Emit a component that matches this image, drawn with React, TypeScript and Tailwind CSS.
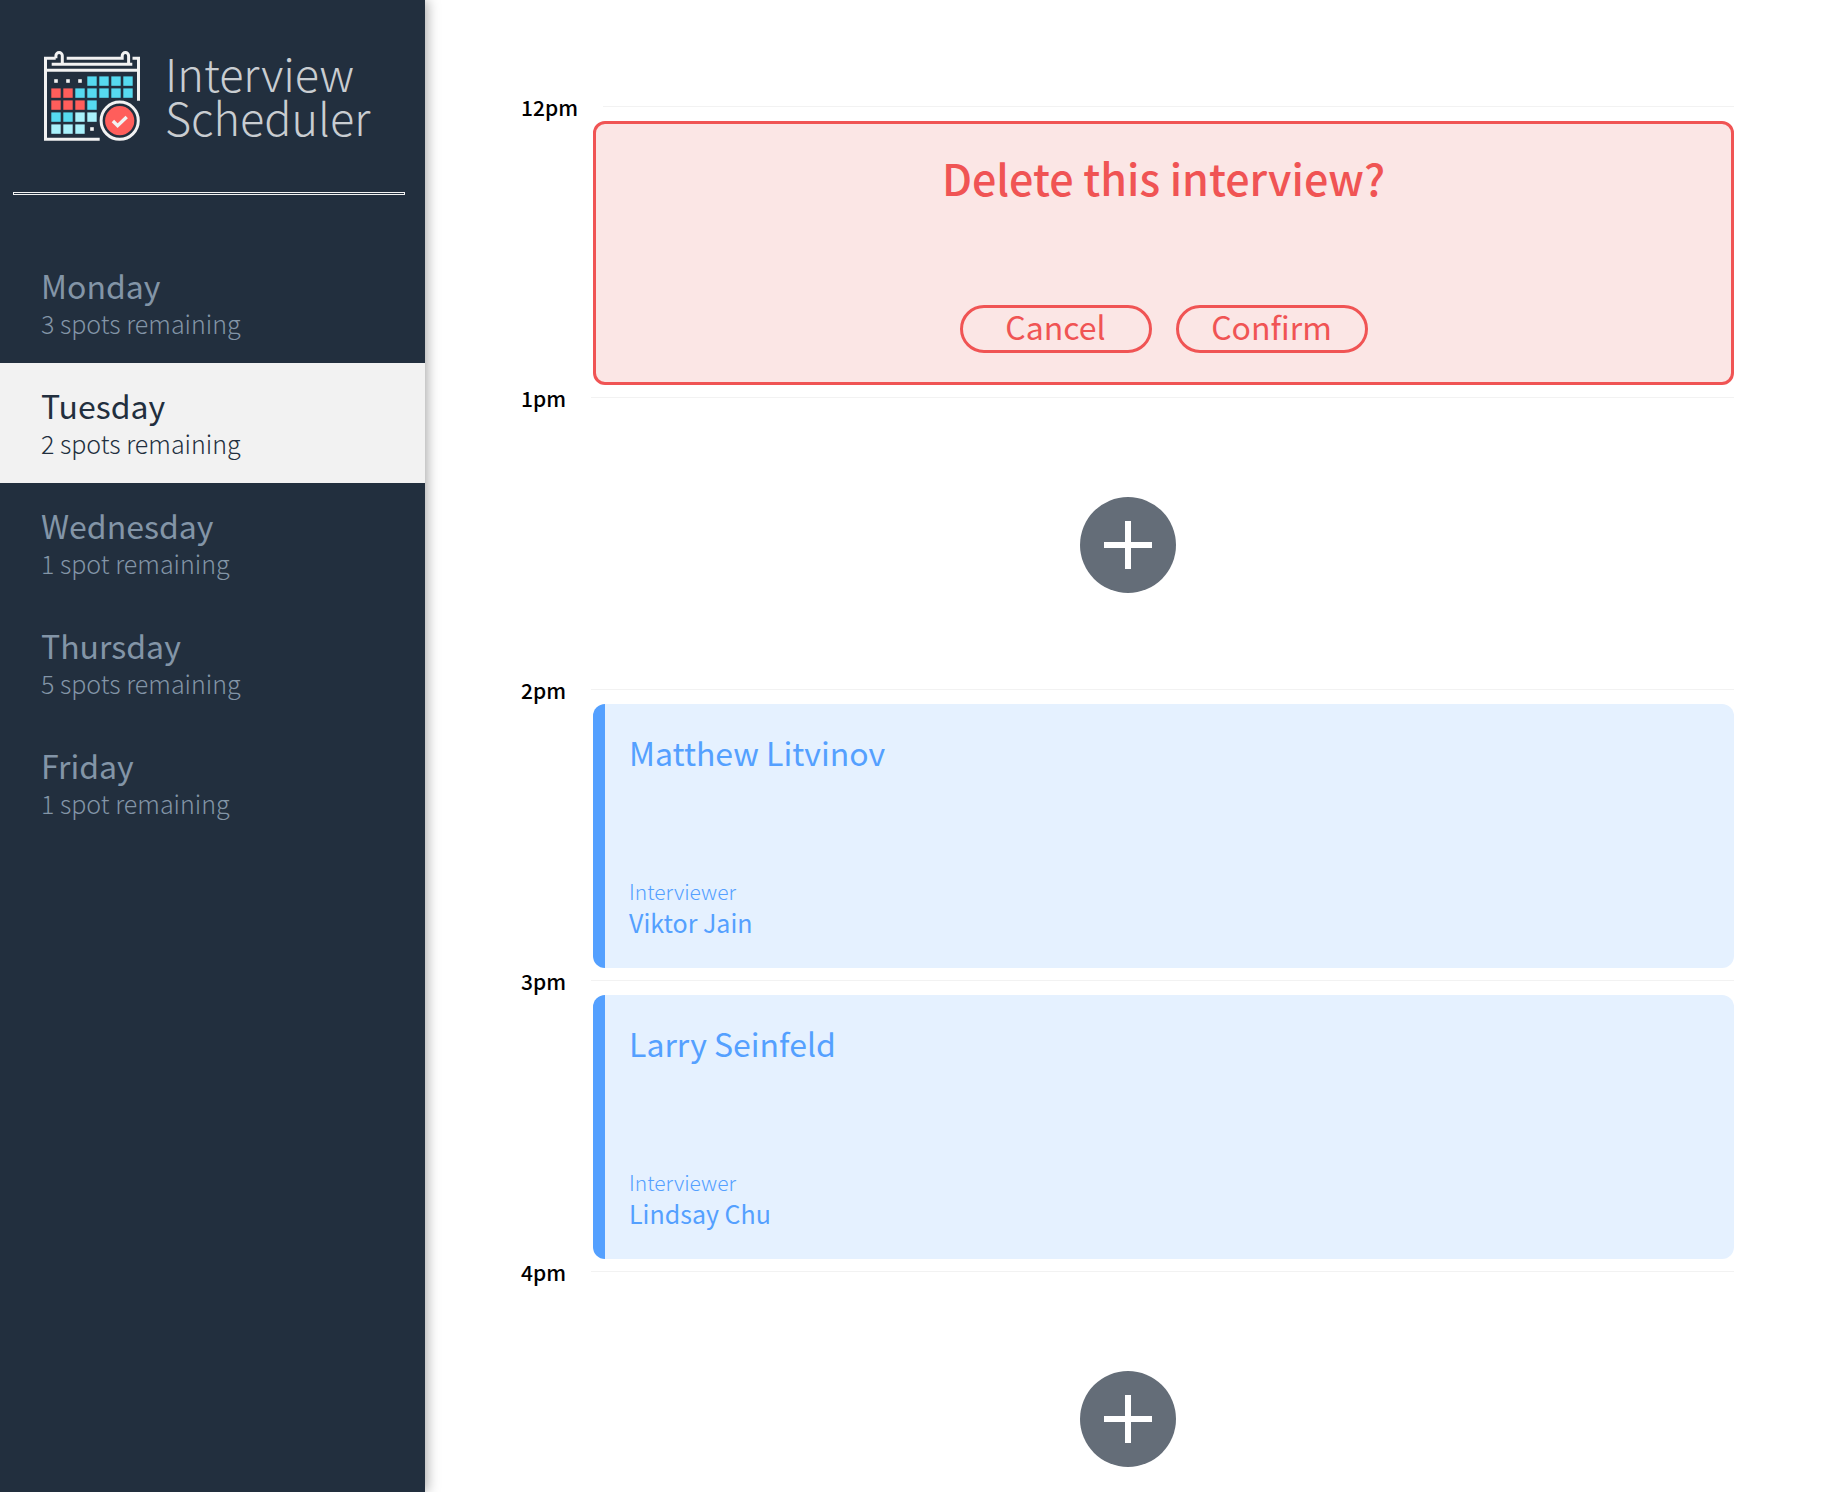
import React from "react";

type Day = { name: string; spots: string };

const days: Day[] = [
  { name: "Monday", spots: "3 spots remaining" },
  { name: "Tuesday", spots: "2 spots remaining" },
  { name: "Wednesday", spots: "1 spot remaining" },
  { name: "Thursday", spots: "5 spots remaining" },
  { name: "Friday", spots: "1 spot remaining" },
];

const CYAN = "#56daf0";
const PALE = "#a9f1fb";
const RED = "#ff5e5b";

// One entry per calendar cell; "." draws a small dot.
const cells = ["...cccc", "rrccccc", "rrrc", "ccpp", "ppp."];

function CalendarLogo() {
  return (
    <svg width="96" height="90" viewBox="0 0 96 90" fill="none" aria-hidden="true" className="shrink-0">
      <g stroke="#f2f2f2" strokeWidth="3">
        <path d="M11.7 7.2H1.5V88.3H55.7" />
        <path d="M11.9 7.2V4.8A3.2 3.2 0 0 1 18.3 4.8V13.3" />
        <path d="M22.7 7.2H78.2V4.8A3.2 3.2 0 0 1 84.6 4.8V13.3" />
        <path d="M88.5 7.2H94.5V49.7" />
        <path d="M7.7 13.3H88.3" />
        <path d="M1.5 19.3H94.5" />
        <circle cx="75.7" cy="69.7" r="18.6" />
      </g>
      {cells.map((row, y) =>
        row.split("").map((c, x) =>
          c === "." ? (
            <rect key={`${x}-${y}`} x={10.2 + x * 12} y={28.2 + y * 12} width="3.6" height="3.6" fill="#f2f2f2" />
          ) : (
            <rect
              key={`${x}-${y}`}
              x={7.3 + x * 12}
              y={25.4 + y * 12}
              width="9.4"
              height="9.4"
              fill={c === "c" ? CYAN : c === "r" ? RED : PALE}
            />
          )
        )
      )}
      <circle cx="75.7" cy="69.7" r="14.6" fill={RED} />
      <path d="M68.9 70L73.6 74.7L82.7 66" stroke="#f2f2f2" strokeWidth="3.4" />
    </svg>
  );
}

function Slot({ time, children }: { time: string; children: React.ReactNode }) {
  return (
    <section>
      <header className="flex h-[27px] items-start gap-[25px]">
        <h2 className="text-[21px] leading-[26px] font-medium text-black">{time}</h2>
        <div className="mt-3 h-px flex-1 bg-[#f2f2f2]" />
      </header>
      {children}
    </section>
  );
}

function AddButton() {
  return (
    <div className="flex h-[265px] items-center justify-center">
      <button type="button" aria-label="Add interview" className="size-24 rounded-full bg-[#646d78]">
        <svg viewBox="0 0 96 96" fill="none" stroke="#fff" strokeWidth="6" aria-hidden="true">
          <path d="M48 24V72M24 48H72" />
        </svg>
      </button>
    </div>
  );
}

function Appointment({ student, interviewer }: { student: string; interviewer: string }) {
  return (
    <article className="ml-[72px] flex h-[264px] flex-col justify-between rounded-xl border-l-12 border-[#54a0ff] bg-[#e5f1ff] px-6 pt-6 pb-[30px] text-[#54a0ff]">
      <h3 className="text-[32px] leading-[48px]">{student}</h3>
      <div>
        <h4 className="text-[21px] leading-[30px] font-light">Interviewer</h4>
        <p className="text-[25px] leading-[32px]">{interviewer}</p>
      </div>
    </article>
  );
}

function ConfirmButton({ children }: { children: React.ReactNode }) {
  return (
    <button type="button" className="h-12 w-48 rounded-full border-3 border-[#f05454] pb-1.5 text-[32px] leading-[36px]">
      {children}
    </button>
  );
}

function ConfirmDelete() {
  return (
    <article className="ml-[72px] flex h-[264px] flex-col items-center justify-between rounded-xl border-3 border-[#f05454] bg-[#fbe6e5] pt-6 pb-[29px] text-[#f05454]">
      <h3 className="text-[43px] leading-[58px] font-medium">Delete this interview?</h3>
      <div className="flex gap-6">
        <ConfirmButton>Cancel</ConfirmButton>
        <ConfirmButton>Confirm</ConfirmButton>
      </div>
    </article>
  );
}

export default function App() {
  return (
    <div className="flex h-screen overflow-hidden bg-white font-['Noto_Sans_CJK_SC','Noto_Sans',sans-serif]">
      <aside className="z-10 w-[425px] shrink-0 bg-[#222f3e] shadow-[2px_0_12px_rgba(0,0,0,0.35)]">
        <div className="flex h-[192px] items-start gap-[25px] pt-[51px] pl-11">
          <CalendarLogo />
          <p className="text-[45px] leading-[44px] font-light text-[#c9cdd1]">
            Interview
            <br />
            Scheduler
          </p>
        </div>
        <hr className="mr-5 ml-[13px] h-[3px] border border-[#f2f2f2]" />
        <nav className="mt-12">
          <ul>
            {days.map((day) => {
              const selected = day.name === "Tuesday";
              return (
                <li key={day.name}>
                  <button
                    type="button"
                    aria-pressed={selected}
                    className={
                      selected
                        ? "block h-[120px] w-full bg-[#f2f2f2] pt-0.5 pl-[41px] text-left text-[#222f3e]"
                        : "block h-[120px] w-full pt-0.5 pl-[41px] text-left text-[#8395a7]"
                    }
                  >
                    <span className="block text-[32px] leading-[39px]">{day.name}</span>
                    <span className="block text-[25px] leading-[37px] font-light">{day.spots}</span>
                  </button>
                </li>
              );
            })}
          </ul>
        </nav>
      </aside>
      <main className="min-w-0 flex-1 overflow-y-auto pt-[94px] pr-[92px] pl-24 [scrollbar-width:none]">
        <Slot time="12pm">
          <ConfirmDelete />
        </Slot>
        <Slot time="1pm">
          <AddButton />
        </Slot>
        <Slot time="2pm">
          <Appointment student="Matthew Litvinov" interviewer="Viktor Jain" />
        </Slot>
        <Slot time="3pm">
          <Appointment student="Larry Seinfeld" interviewer="Lindsay Chu" />
        </Slot>
        <Slot time="4pm">
          <AddButton />
        </Slot>
      </main>
    </div>
  );
}
